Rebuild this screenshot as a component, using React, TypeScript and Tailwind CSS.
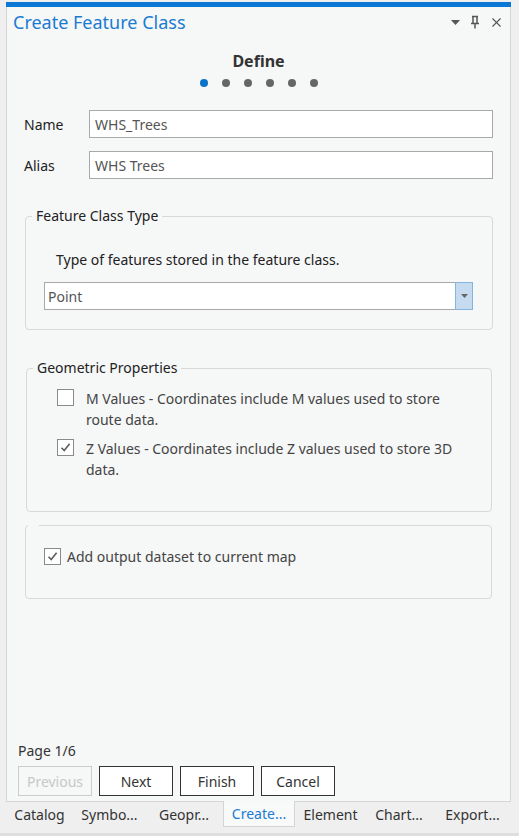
import React from 'react';
import { X } from 'lucide-react';

const font = { fontFamily: '"Noto Sans", "Open Sans", sans-serif' };

const CheckBox: React.FC<{ checked?: boolean }> = ({ checked }) => (
  <span className="w-[17px] h-[17px] shrink-0 border border-[#8a8a8a] bg-white flex items-center justify-center">
    {checked && (
      <svg width="13" height="13" viewBox="0 0 13 13">
        <path d="M2.5 6.8 L5.2 9.6 L10.6 2.8" fill="none" stroke="#5f5f5f" strokeWidth="1.6" />
      </svg>
    )}
  </span>
);

const tabs = [
  { label: 'Catalog', w: 'w-[69px]' },
  { label: 'Symbo...', w: 'w-[71px]' },
  { label: 'Geopr...', w: 'w-[78px]' },
  { label: 'Create...', w: 'w-[72px]', active: true },
  { label: 'Element', w: 'w-[71px]' },
  { label: 'Chart...', w: 'w-[66px]' },
  { label: 'Export...', w: 'w-[81px]' },
];

export default function App() {
  return (
    <div
      className="w-[519px] h-[836px] bg-[#efefef] flex flex-col overflow-hidden text-[14px] text-[#222]"
      style={font}
    >
      {/* Pane */}
      <div className="ml-[6px] w-[505px] mt-[2px] h-[800px] flex flex-col border border-[#d6d6d6] border-t-0 bg-[#f6f7f7]">
        <div className="h-[5px] bg-[#0a78d4] -mx-px" />

        {/* Header */}
        <div className="flex items-center justify-between pl-[6px] pr-[6px] h-[30px]">
          <span className="text-[18px] text-[#1a7bd2] leading-none">Create Feature Class</span>
          <div className="flex items-center gap-[9px] text-[#555]">
            <svg width="11" height="8" viewBox="0 0 11 8">
              <path d="M1 2 L10 2 L5.5 7 Z" fill="#555" />
            </svg>
            <svg width="10" height="14" viewBox="0 0 10 14">
              <path d="M2 1.5 H8 M3 1.5 V8 M7 1.5 V8 M1 8.5 H9 M5 8.5 V13.5" fill="none" stroke="#555" strokeWidth="1.5" />
            </svg>
            <X size={15} strokeWidth={1.8} color="#555" />
          </div>
        </div>

        {/* Step */}
        <div className="flex flex-col items-center mt-[14px]">
          <span className="text-[16px] font-bold text-[#333] leading-[20px]">Define</span>
          <div className="flex gap-[14px] mt-[8px]">
            <span className="w-[8px] h-[8px] rounded-full bg-[#0a72c8]" />
            <span className="w-[8px] h-[8px] rounded-full bg-[#666]" />
            <span className="w-[8px] h-[8px] rounded-full bg-[#666]" />
            <span className="w-[8px] h-[8px] rounded-full bg-[#666]" />
            <span className="w-[8px] h-[8px] rounded-full bg-[#666]" />
            <span className="w-[8px] h-[8px] rounded-full bg-[#666]" />
          </div>
        </div>

        {/* Name / Alias */}
        <div className="flex flex-col gap-[13px] mt-[23px] pl-[17px] pr-[17px]">
          <div className="flex items-center">
            <span className="w-[65px]">Name</span>
            <div className="flex-1 h-[28px] border border-[#a8a8a8] bg-white px-[5px] flex items-center text-[#555]">WHS_Trees</div>
          </div>
          <div className="flex items-center">
            <span className="w-[65px]">Alias</span>
            <div className="flex-1 h-[28px] border border-[#a8a8a8] bg-white px-[5px] flex items-center text-[#555]">WHS Trees</div>
          </div>
        </div>

        {/* Feature Class Type */}
        <fieldset className="mt-[28px] ml-[18px] mr-[17px] h-[123px] border border-[#d8d8d8] rounded-[4px] pl-[18px] pr-[19px]">
          <legend className="-ml-[12px] px-[4px] leading-[18px]">Feature Class Type</legend>
          <div className="mt-[25px] ml-[12px] leading-[20px]">Type of features stored in the feature class.</div>
          <div className="mt-[12px] h-[28px] flex border border-[#a8a8a8] bg-white">
            <span className="flex-1 px-[3px] flex items-center text-[#555]">Point</span>
            <span className="w-[18px] -my-px -mr-px bg-[#c6dbef] border border-[#84b4e0] flex items-center justify-center">
              <svg width="7" height="4" viewBox="0 0 7 4"><path d="M0 0 H7 L3.5 4 Z" fill="#666" /></svg>
            </span>
          </div>
        </fieldset>

        {/* Geometric Properties */}
        <fieldset className="mt-[29px] ml-[19px] mr-[18px] h-[153px] border border-[#d8d8d8] rounded-[4px] pl-[30px] pr-[12px]">
          <legend className="-ml-[24px] px-[4px] leading-[18px]">Geometric Properties</legend>
          <div className="flex flex-col gap-[8px] mt-[11px] text-[#444]">
            <div className="flex items-start gap-[12px]">
              <span className="mt-[1px]"><CheckBox /></span>
              <span className="leading-[21px] max-w-[378px]">M Values - Coordinates include M values used to store route data.</span>
            </div>
            <div className="flex items-start gap-[12px]">
              <span className="mt-[1px]"><CheckBox checked /></span>
              <span className="leading-[21px] max-w-[378px]">Z Values - Coordinates include Z values used to store 3D data.</span>
            </div>
          </div>
        </fieldset>

        {/* Add output */}
        <fieldset className="mt-[12px] ml-[18px] mr-[18px] h-[75px] border border-[#d8d8d8] rounded-[4px] pl-[18px]">
          <legend className="-ml-[16px] w-[11px] h-[2px]" />
          <div className="flex items-center gap-[6px] mt-[20px] text-[#444]">
            <CheckBox checked />
            <span>Add output dataset to current map</span>
          </div>
        </fieldset>

        <div className="flex-1" />

        {/* Footer */}
        <div className="pl-[11px] pb-[5px]">
          <div className="text-[#333] leading-[20px]">Page 1/6</div>
          <div className="flex gap-[7px] mt-[5px]">
            <button className="w-[74px] h-[30px] border border-[#cccccc] text-[#c8c8c8] bg-[#f6f7f7]">Previous</button>
            <button className="w-[74px] h-[30px] border border-[#333] text-[#333] bg-white">Next</button>
            <button className="w-[74px] h-[30px] border border-[#333] text-[#333] bg-white">Finish</button>
            <button className="w-[74px] h-[30px] border border-[#333] text-[#333] bg-white">Cancel</button>
          </div>
        </div>
      </div>

      {/* Tabs */}
      <div className="flex h-[25px] pl-[5px]">
        {tabs.map((t) => (
          <div
            key={t.label}
            className={
              t.active
                ? `${t.w} flex items-center justify-center text-[#1a7bd2] bg-[#f8f9f9] border-x border-b border-[#d4d4d4] -mt-px`
                : `${t.w} flex items-center justify-center text-[#333]`
            }
          >
            {t.label}
          </div>
        ))}
      </div>
      <div className="flex-1" />
      <div className="h-[3px] bg-[#dedede]" />
    </div>
  );
}
